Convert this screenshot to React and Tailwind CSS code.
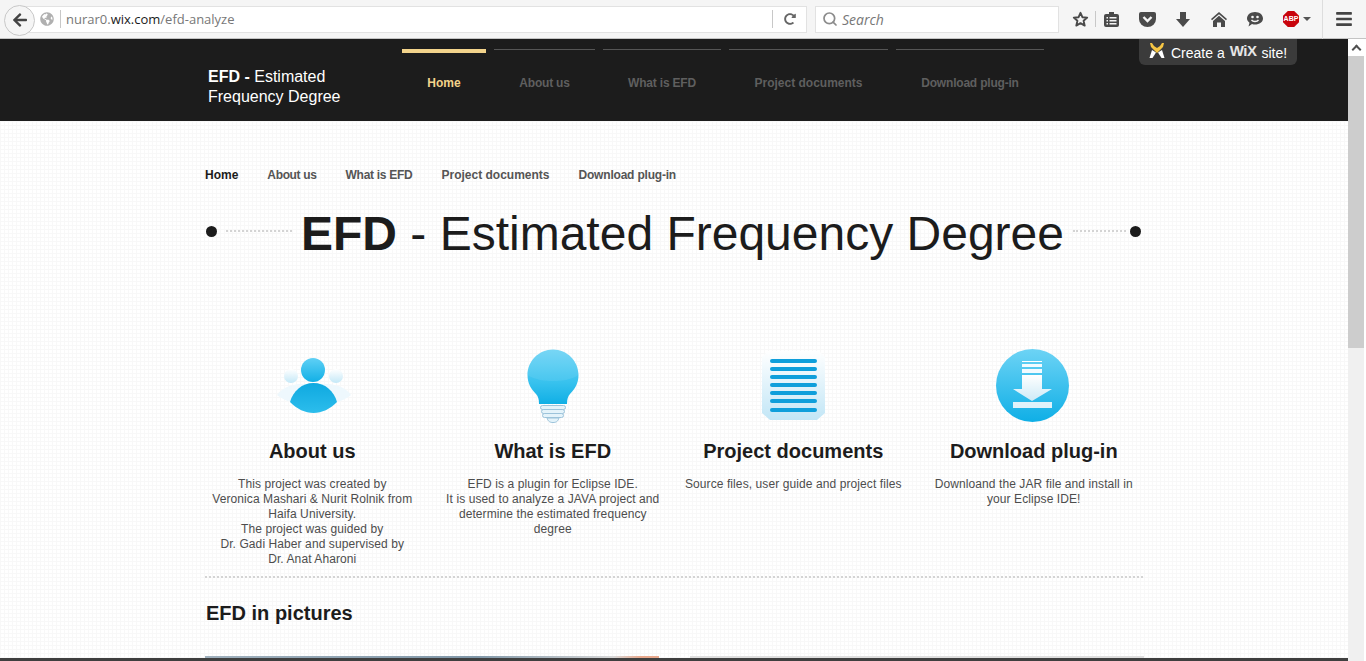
import React from "react";
import { FaBars, FaArrowLeft, FaGlobeAmericas, FaRedoAlt } from "react-icons/fa";
import { Search } from "lucide-react";

const topLinks = [
  { label: "Home", width: "w-[84px]", active: true },
  { label: "About us", width: "w-[101px]", tight: "tracking-[-0.2px]" },
  { label: "What is EFD", width: "w-[118px]", tight: "tracking-[-0.2px]" },
  { label: "Project documents", width: "w-[159px]" },
  { label: "Download plug-in", width: "w-[148px]", tight: "tracking-[-0.2px]" },
];

const subLinks = [
  { label: "About us", tight: "tracking-[-0.35px]" },
  { label: "What is EFD", tight: "tracking-[-0.28px]" },
  { label: "Project documents", tight: "" },
  { label: "Download plug-in", tight: "tracking-[-0.2px]" },
];

const PeopleIcon = () => (
  <svg width="74" height="57" viewBox="0 0 74 57" className="ml-[3px]">
    <defs>
      <linearGradient id="peopleBlue" x1="0" y1="0" x2="0" y2="1">
        <stop offset="0" stopColor="#5fd0f5" />
        <stop offset="1" stopColor="#12b0e6" />
      </linearGradient>
      <linearGradient id="peopleBody" x1="0" y1="0" x2="0" y2="1">
        <stop offset="0" stopColor="#0fa9e0" />
        <stop offset="1" stopColor="#2cbdec" />
      </linearGradient>
      <linearGradient id="peoplePale" x1="0" y1="0" x2="0" y2="1">
        <stop offset="0" stopColor="#ffffff" />
        <stop offset="1" stopColor="#c4e8f7" />
      </linearGradient>
    </defs>
    <circle cx="14" cy="19" r="7" fill="url(#peoplePale)" />
    <circle cx="59" cy="19" r="7" fill="url(#peoplePale)" />
    <path d="M0 38C5 31 13 28 22 27L52 27C61 28 69 31 74 38C68 43 60 46 50 46L24 46C14 46 6 43 0 38Z" fill="#eef8fd" />
    <circle cx="36" cy="13" r="12" fill="url(#peopleBlue)" />
    <path d="M13 45C16 34 25 26 36.500 26C48 26 57 34 60 45C53 52 45 56 36.500 56C28 56 20 52 13 45Z" fill="url(#peopleBody)" />
  </svg>
);

const BulbIcon = () => (
  <svg width="52" height="74" viewBox="0 0 52 74">
    <defs>
      <linearGradient id="bulbBlue" x1="0" y1="0" x2="0" y2="1">
        <stop offset="0" stopColor="#6dd3f5" />
        <stop offset="0.6" stopColor="#38c2ee" />
        <stop offset="1" stopColor="#10afe5" />
      </linearGradient>
    </defs>
    <path d="M12 55C12 50 11 47 9 45C4 40 0.500 34 0.500 26C0.500 12 12 0.500 26 0.500C40 0.500 51.500 12 51.500 26C51.500 34 48 40 43 45C41 47 40 50 40 55Z" fill="url(#bulbBlue)" />
    <path d="M0.500 26C0.500 12 12 0.500 26 0.500C40 0.500 51.500 12 51.500 26C44 31 34 32 26 32C18 32 8 31 0.500 26Z" fill="#ffffff" opacity="0.08" />
    <g fill="#e4f3fa" stroke="#9cc3da" strokeWidth="1">
      <rect x="13.500" y="56.500" width="25" height="4" rx="2" />
      <rect x="14.500" y="60.500" width="23" height="4" rx="2" />
      <rect x="15.500" y="64.500" width="21" height="4" rx="2" />
      <path d="M20 69L32 69C31 72.500 29 73.500 26 73.500C23 73.500 21 72.500 20 69Z" />
    </g>
  </svg>
);

const DocIcon = () => (
  <svg width="63" height="69" viewBox="0 0 63 69">
    <defs>
      <linearGradient id="docPale" x1="0" y1="0" x2="0" y2="1">
        <stop offset="0" stopColor="#ffffff" />
        <stop offset="1" stopColor="#c2e6f6" />
      </linearGradient>
    </defs>
    <path d="M6 0L57 0L63 6L63 62L55 69L8 69L0 62L0 6Z" fill="url(#docPale)" />
    {[8, 16, 24, 32, 40, 48, 57].map((y) => (
      <rect key={y} x="8" y={y} width="47" height="4" rx="2" fill="#0f9fdb" />
    ))}
  </svg>
);

const DownloadIcon = () => (
  <svg width="73" height="73" viewBox="0 0 73 73" className="-ml-[2px]">
    <defs>
      <linearGradient id="dlBlue" x1="0" y1="0" x2="0" y2="1">
        <stop offset="0" stopColor="#6dd3f5" />
        <stop offset="1" stopColor="#0fafe6" />
      </linearGradient>
      <linearGradient id="dlPale" x1="0" y1="0" x2="0" y2="1">
        <stop offset="0" stopColor="#ffffff" />
        <stop offset="1" stopColor="#cdeaf7" />
      </linearGradient>
    </defs>
    <circle cx="36.500" cy="36.500" r="36.500" fill="url(#dlBlue)" />
    <rect x="26" y="12" width="20" height="1" fill="#ffffff" />
    <rect x="26" y="15" width="20" height="3" fill="#f2fbff" />
    <rect x="26" y="20" width="20" height="4" fill="#f2fbff" />
    <path d="M26 26L46 26L46 40L56 40L36 52L17 40L26 40Z" fill="url(#dlPale)" />
    <rect x="17" y="53" width="39" height="6" fill="#dff2fa" />
  </svg>
);

const features = [
  {
    title: "About us",
    icon: <PeopleIcon />,
    iconTop: "pt-[8px]",
    lines: [
      "This project was created by",
      "Veronica Mashari & Nurit Rolnik from",
      "Haifa University.",
      "The project was guided by",
      "Dr. Gadi Haber and supervised by",
      "Dr. Anat Aharoni",
    ],
  },
  {
    title: "What is EFD",
    icon: <BulbIcon />,
    iconTop: "pt-0",
    lines: [
      "EFD is a plugin for Eclipse IDE.",
      "It is used to analyze a JAVA project and",
      "determine the estimated frequency",
      "degree",
    ],
  },
  {
    title: "Project documents",
    icon: <DocIcon />,
    iconTop: "pt-[2px]",
    lines: ["Source files, user guide and project files"],
  },
  {
    title: "Download plug-in",
    icon: <DownloadIcon />,
    iconTop: "pt-0",
    lines: ["Downloand the JAR file and install in", "your Eclipse IDE!"],
  },
];

const Toolbar = () => (
  <div className="h-[39px] bg-[#f5f5f5] border-b border-[#c4c4c4] flex items-center text-[#4a4a4a]">
    {/* ADDRESS BAR */}
    <div className="relative ml-[18px] w-[789px] h-[27px] bg-white border border-[#e2e2e2] flex items-center">
      <div className="absolute -left-[15px] -top-[2px] w-[31px] h-[31px] rounded-full bg-[#f5f5f5] border border-[#c8c8c8] flex items-center justify-center">
        <FaArrowLeft className="text-[16px] text-[#444444]" />
      </div>
      <FaGlobeAmericas className="ml-[21px] text-[14px] text-[#b0b0b0] shrink-0" />
      <span className="w-px h-[18px] bg-[#c8c8c8] ml-[6px] mr-[5px] shrink-0" />
      <span className="font-['Open_Sans'] text-[13px] text-[#777777] pt-[2px] flex-1">
        nurar0.<span className="text-[#1a1a1a]">wix.com</span>/efd-analyze
      </span>
      <span className="w-px h-[18px] bg-[#c8c8c8] shrink-0" />
      <span className="w-[33px] flex items-center justify-center shrink-0">
        <FaRedoAlt className="text-[12px] text-[#666666]" />
      </span>
    </div>
    {/* SEARCH */}
    <div className="ml-[8px] w-[244px] h-[27px] bg-white border border-[#e2e2e2] flex items-center pl-[6px]">
      <Search size={16} strokeWidth={2.6} className="text-[#8c8c8c]" />
      <span className="ml-[4px] pt-[1px] font-['Open_Sans'] italic text-[14px] text-[#777777]">Search</span>
    </div>
    {/* ADDON ICONS */}
    <div className="flex items-center ml-[13px]">
      <svg width="17" height="17" viewBox="0 0 17 17">
        <path d="M8.500 1.800L10.400 6.200L15.200 6.600L11.600 9.800L12.700 14.600L8.500 12.100L4.300 14.600L5.400 9.800L1.800 6.600L6.600 6.200Z" fill="none" stroke="#4a4a4a" strokeWidth="1.900" strokeLinejoin="round" />
      </svg>
      <span className="w-px h-[16px] bg-[#c8c8c8] ml-[6px]" />
      <div className="w-[30px] mr-[3px] flex justify-center">
        <svg width="15" height="16" viewBox="0 0 15 16">
          <path d="M2 3H5V1H10V3H13A2 2 0 0 1 15 5V14A2 2 0 0 1 13 16H2A2 2 0 0 1 0 14V5A2 2 0 0 1 2 3Z" fill="#4a4a4a" />
          <path d="M2.500 6H4V7.500H2.500ZM5.500 6H12.500V7.500H5.500ZM2.500 9H4V10.500H2.500ZM5.500 9H12.500V10.500H5.500ZM2.500 12H4V13.500H2.500ZM5.500 12H12.500V13.500H5.500Z" fill="#f5f5f5" />
        </svg>
      </div>
      <div className="w-[36px] flex justify-center">
        <svg width="17" height="15" viewBox="0 0 17 15">
          <path d="M2 0H15A2 2 0 0 1 17 2V7A8.500 8 0 0 1 0 7V2A2 2 0 0 1 2 0Z" fill="#4a4a4a" />
          <path d="M4.500 5L8.500 9L12.500 5" fill="none" stroke="#f5f5f5" strokeWidth="2.400" />
        </svg>
      </div>
      <div className="w-[36px] flex justify-center">
        <svg width="14" height="15" viewBox="0 0 14 15">
          <path d="M4 0H10V7H14L7 15L0 7H4Z" fill="#4a4a4a" />
        </svg>
      </div>
      <div className="w-[36px] flex justify-center">
        <svg width="16" height="15" viewBox="0 0 16 15">
          <path d="M8 0L16 7L15 8.200L8 2.200L1 8.200L0 7Z" fill="#4a4a4a" />
          <path d="M8 3.800L14 9V15H10V10.500H6V15H2V9Z" fill="#4a4a4a" />
        </svg>
      </div>
      <div className="w-[36px] flex justify-center">
        <svg width="16" height="15" viewBox="0 0 16 15">
          <path d="M8 0C12.500 0 16 2.800 16 6.500C16 10 12.500 12.500 8 12.500C7 12.500 6 12.400 5 12L1.500 14.500L2.500 10.800C1 9.600 0 8.200 0 6.500C0 2.800 3.500 0 8 0Z" fill="#4a4a4a" />
          <circle cx="5.500" cy="5" r="1.300" fill="#f5f5f5" />
          <circle cx="10.500" cy="5" r="1.300" fill="#f5f5f5" />
          <path d="M4.500 8C6 10 10 10 11.500 8" fill="none" stroke="#f5f5f5" strokeWidth="1.300" />
        </svg>
      </div>
      <span className="ml-[10px] w-[16px] h-[16px] bg-[#c8040c] [clip-path:polygon(30%_0,70%_0,100%_30%,100%_70%,70%_100%,30%_100%,0_70%,0_30%)] text-white text-[7px] leading-[16px] text-center font-bold font-['Liberation_Sans']">ABP</span>
      <span className="ml-[4px] w-0 h-0 border-x-[4px] border-x-transparent border-t-[4px] border-t-[#555555]" />
    </div>
    <span className="w-px h-[39px] bg-[#dddddd] ml-[11px]" />
    <FaBars className="text-[18px] ml-[12px] text-[#444444]" />
  </div>
);

const Header = () => (
  <header className="relative h-[82px] bg-[#1c1c1c] flex font-['Liberation_Sans'] pl-[208px]">
    <div className="w-[194px] pt-[28px] text-[16px] leading-[20px] text-white">
      <b>EFD - </b>Estimated
      <br />
      Frequency Degree
    </div>
    <nav className="flex gap-[8px] pt-[10px]">
      {topLinks.map((link) => (
        <a
          key={link.label}
          className={`${link.width} ${link.tight || ""} h-[60px] text-center text-[12px] font-bold ${
            link.active
              ? "border-t-[4px] border-[#f2d38b] text-[#f2d38b] leading-[60px]"
              : "border-t border-[#555555] text-[#5f5f5f] leading-[66px]"
          }`}
        >
          {link.label}
        </a>
      ))}
    </nav>
    {/* WIX BANNER */}
    <div className="absolute right-[51px] top-0 w-[158px] h-[26px] rounded-b-[6px] bg-[#3b3b3b] flex items-center pl-[10px] pt-[2px] text-[14px] text-white">
      <svg width="16" height="15" viewBox="0 0 16 15" className="mr-[6px] -mt-[5px] shrink-0">
        <path d="M3 7L7 9.500L3.500 15H0.500Z" fill="#ffffff" />
        <path d="M13 7L9 9.500L12.500 15H15.500Z" fill="#ffffff" />
        <path d="M1 0L3 0L5 3L8 5L11 3L13 0L15 0L14 4L8 10L2 4Z" fill="#f6c644" />
      </svg>
      Create a
      <span className="mx-[5px] font-bold text-[15px] tracking-[-0.5px] -mt-[3px] text-[#e6e6e6]">WiX</span>
      site!
    </div>
  </header>
);

export default function App() {
  return (
    <div className="h-[661px] overflow-hidden bg-white">
      <Toolbar />
      <div className="flex h-[622px]">
        <div className="relative w-[1348px] overflow-hidden">
          <Header />
          <main className="h-[540px] bg-white bg-[linear-gradient(#f8f8f8_1px,transparent_1px),linear-gradient(90deg,#f8f8f8_1px,transparent_1px)] bg-[size:4px_4px] font-['Liberation_Sans'] pl-[205px]">
            <div className="w-[938px]">
              {/* SUB NAV */}
              <div className="flex gap-[29px] pt-[47px] text-[12px] leading-[15px] font-bold text-[#555555]">
                <span className="text-[#1c1c1c]">Home</span>
                {subLinks.map((link) => (
                  <span key={link.label} className={link.tight}>{link.label}</span>
                ))}
              </div>

              {/* TITLE */}
              <div className="flex items-center mt-[18px] h-[60px]">
                <span className="w-[11px] h-[11px] rounded-full bg-[#1c1c1c] ml-px shrink-0" />
                <span className="w-[66px] ml-[9px] border-t-2 border-dotted border-[#d4d4d4] shrink-0" />
                <h1 className="ml-[9px] mt-[6px] text-[48px] leading-[60px] text-[#1c1c1c] whitespace-nowrap">
                  <b>EFD</b> - Estimated Frequency Degree
                </h1>
                <span className="w-[53px] ml-[9px] border-t-2 border-dotted border-[#d4d4d4] shrink-0" />
                <span className="w-[11px] h-[11px] rounded-full bg-[#1c1c1c] ml-[4px] shrink-0" />
              </div>

              {/* FEATURES */}
              <div className="grid grid-cols-[repeat(4,240.5px)] mt-[88px] -ml-[13px] w-[962px] h-[227px]">
                {features.map((f) => (
                  <div key={f.title} className="flex flex-col items-center text-center">
                    <div className={`h-[80px] ${f.iconTop}`}>{f.icon}</div>
                    <h3 className="mt-[10px] text-[20px] leading-[24px] font-bold text-[#1c1c1c] whitespace-nowrap">{f.title}</h3>
                    <p className="mt-[14px] text-[12px] leading-[15px] tracking-[0.09px] text-[#4d4d4d] whitespace-nowrap">
                      {f.lines.map((line) => (
                        <span key={line} className="block">{line}</span>
                      ))}
                    </p>
                  </div>
                ))}
              </div>
              <div className="border-t-2 border-dotted border-[#d4d4d4]" />

              <h2 className="mt-[23px] ml-px text-[20px] leading-[24px] font-bold text-[#1c1c1c]">EFD in pictures</h2>

              {/* GALLERY (just peeking in above the fold) */}
              <div className="flex justify-between mt-[31px] -mr-[1px]">
                <div className="w-[454px] h-[40px] bg-[linear-gradient(90deg,#9fb0bd_0,#8097a8_60%,#d8d8d8_90%,#e8a88c_96%)]" />
                <div className="w-[454px] h-[40px] bg-[#dedede]" />
              </div>
            </div>
          </main>
          <div className="absolute bottom-0 left-0 right-0 h-[3px] bg-[#3f3f3f]" />
        </div>
        {/* SCROLLBAR */}
        <div className="w-[16px] bg-[#f0f0f0] flex flex-col">
          <div className="h-[17px] bg-white flex items-center justify-center">
            <span className="w-[7px] h-[7px] border-l-2 border-t-2 border-[#505050] rotate-45 mt-[3px]" />
          </div>
          <div className="h-[292px] bg-[#cdcdcd]" />
        </div>
      </div>
    </div>
  );
}
